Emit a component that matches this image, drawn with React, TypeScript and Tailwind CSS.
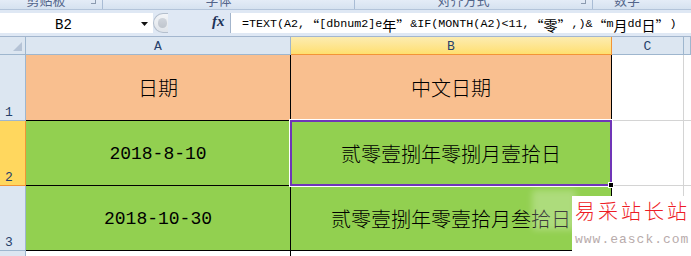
import React from "react";

const cjk = "font-['Noto_Sans_CJK_SC',sans-serif]";
const mono = "font-['Liberation_Mono','DejaVu_Sans_Mono',monospace]";

function Hdr({ children, sel }: { children?: React.ReactNode; sel?: boolean }) {
  return (
    <div
      className={
        sel
          ? "bg-linear-to-b from-[#fcecb0] to-[#ffdf6e] border-r border-b border-[#f29436] flex items-end justify-center pb-[1px] text-[13px] leading-none text-[#27416b] font-['Liberation_Mono',monospace]"
          : "bg-[#dce6f1] border-r border-b border-[#9eb6ce] flex items-end justify-center pb-[1px] text-[13px] leading-none text-[#27416b] font-['Liberation_Mono',monospace]"
      }
    >
      {children}
    </div>
  );
}

function RowHdr({ n, sel }: { n: string; sel?: boolean }) {
  return (
    <div
      className={
        sel
          ? "bg-[#ffd75e] border-r border-b border-[#f29436] flex items-end pl-[5px] pb-[1px] text-[13px] leading-none text-[#27416b] font-['Liberation_Mono',monospace]"
          : "bg-[#dce6f1] border-r border-b border-[#9eb6ce] flex items-end pl-[5px] pb-[1px] text-[13px] leading-none text-[#27416b] font-['Liberation_Mono',monospace]"
      }
    >
      {n}
    </div>
  );
}

export default function App() {
  return (
    <div className="relative w-[691px] h-[256px] overflow-hidden bg-white">
      {/* ribbon bottom strip (group labels cut off at the top edge, as in the reference) */}
      <div className="h-[10px] bg-linear-to-b from-[#e4ecf7] to-[#d6e2f0] border-b border-[#b3c4da] flex overflow-hidden text-[13px] leading-none text-[#53658a]">
        <div className={`w-[103px] relative flex justify-center border-r border-[#a9bcd5] ${cjk}`}>
          <span className="-mt-[7px] pr-[10px]">剪贴板</span>
          <span className="absolute right-[6px] top-0 w-[5px] h-[4px] border-r border-b border-[#8c9bb0]" />
        </div>
        <div className={`w-[252px] flex justify-center border-r border-[#a9bcd5] ${cjk}`}>
          <span className="-mt-[7px] pr-[20px]">字体</span>
        </div>
        <div className={`w-[238px] relative flex justify-center border-r border-[#a9bcd5] ${cjk}`}>
          <span className="-mt-[7px] pr-[20px]">对齐方式</span>
          <span className="absolute right-[6px] top-0 w-[5px] h-[4px] border-r border-b border-[#8c9bb0]" />
        </div>
        <div className={`flex-1 flex justify-center ${cjk}`}>
          <span className="-mt-[7px] pr-[30px]">数字</span>
        </div>
      </div>

      {/* formula bar */}
      <div className="h-[27px] bg-[#dfe8f4] border-b border-[#a3b6ce] pt-[3px] flex">
        <div className="w-[153px] h-[20px] bg-white relative flex items-center">
          <span className={`w-[127px] text-center text-[14px] leading-none pt-[3px] text-black ${mono}`}>B2</span>
          <svg className="absolute left-[141px] top-[9px]" width="7" height="4" viewBox="0 0 7 4">
            <path d="M0 0H7L3.5 4Z" fill="#111" />
          </svg>
        </div>
        <div className="w-[77px] h-[20px] relative flex items-center">
          <div className="absolute left-0 top-0 w-[15px] h-[20px] rounded-l-full border border-r-0 border-[#b4bfcd] bg-linear-to-b from-[#f3f5f8] to-[#dfe4ea] flex items-center justify-end">
            <div className="w-[9px] h-[10px] rounded-full bg-linear-to-b from-[#d0d5dc] to-[#bfc5cd] mr-[1px]" />
          </div>
          <span className="absolute left-[59px] top-[1px] text-[15px] leading-none italic font-bold text-[#1d3358] font-['Liberation_Serif',serif]">
            fx
          </span>
        </div>
        <div className="w-px h-[20px] bg-[#a3b5cc]" />
        <div className="flex-1 h-[20px] bg-white pl-[11px] flex items-center whitespace-nowrap overflow-hidden text-[11.7px] leading-none text-black pt-[3px]">
          <span className={mono}>=TEXT(A2,</span>
          <span className={`${cjk} text-[14px]`}>“</span>
          <span className={mono}>[dbnum2]e</span>
          <span className={`${cjk} text-[14px]`}>年”</span>
          <span className={mono}>&amp;IF(MONTH(A2)&lt;11,</span>
          <span className={`${cjk} text-[14px]`}>“零”</span>
          <span className={mono}>,)&amp;</span>
          <span className={`${cjk} text-[14px]`}>“</span>
          <span className={mono}>m</span>
          <span className={`${cjk} text-[14px]`}>月</span>
          <span className={mono}>dd</span>
          <span className={`${cjk} text-[14px]`}>日”</span>
          <span className={mono}>)</span>
        </div>
      </div>

      {/* grid */}
      <div className="grid grid-cols-[26px_265px_321px_72px_7px] grid-rows-[18px_66px_65px_65px_5px] h-[219px] overflow-hidden">
        <div className="bg-[#dce6f1] border-r border-b border-[#9eb6ce] relative">
          <svg className="absolute right-[3px] bottom-[3px]" width="9" height="9" viewBox="0 0 9 9">
            <path d="M9 0V9H0Z" fill="#b5c3d6" />
          </svg>
        </div>
        <Hdr>A</Hdr>
        <Hdr sel>B</Hdr>
        <Hdr>C</Hdr>
        <Hdr />

        <RowHdr n="1" />
        <div className={`bg-[#f9bf8f] border-r border-b border-black flex items-center justify-center text-[20px] font-light text-black ${cjk}`}>
          日期
        </div>
        <div className={`bg-[#f9bf8f] border-r border-b border-black flex items-center justify-center text-[20px] font-light text-black ${cjk}`}>
          中文日期
        </div>
        <div className="border-r border-b border-[#d4d4d4]" />
        <div className="border-b border-[#d4d4d4]" />

        <RowHdr n="2" sel />
        <div className={`bg-[#92d050] border-r border-b border-black flex items-center justify-center text-[18px] text-black pt-[2px] ${mono}`}>
          2018-8-10
        </div>
        <div className={`bg-[#92d050] border-r border-b border-black flex items-center justify-center text-[20px] font-light text-black pt-[2px] ${cjk}`}>
          贰零壹捌年零捌月壹拾日
        </div>
        <div className="border-r border-b border-[#d4d4d4]" />
        <div className="border-b border-[#d4d4d4]" />

        <RowHdr n="3" />
        <div className={`bg-[#92d050] border-r border-b border-black flex items-center justify-center text-[18px] text-black pt-[2px] ${mono}`}>
          2018-10-30
        </div>
        <div className={`bg-[#92d050] border-r border-b border-black flex items-center justify-center text-[20px] font-light text-black pt-[2px] whitespace-nowrap ${cjk}`}>
          贰零壹捌年零壹拾月叁拾日
        </div>
        <div className="border-r border-b border-[#d4d4d4]" />
        <div className="border-b border-[#d4d4d4]" />

        <div className="bg-[#dce6f1] border-r border-[#9eb6ce]" />
        <div className="border-r border-black" />
        <div className="border-r border-black" />
        <div className="border-r border-[#d4d4d4]" />
        <div />
      </div>

      {/* selection B2 */}
      <div className="absolute left-[289px] top-[119px] w-[324px] h-[68px] border border-white pointer-events-none">
        <div className="w-full h-full border-2 border-[#7035b8]" />
      </div>
      <div className="absolute left-[608px] top-[182px] w-[6px] h-[6px] bg-black border border-white" />

      {/* watermark */}
      <div className="absolute left-[532px] top-[190px] w-[44px] h-[40px] bg-white/25 blur-[3px] rounded-sm" />
      <div className="absolute left-[572px] top-[196px] w-[119px] h-[60px] bg-white flex flex-col">
        <div className={`pl-[3px] pt-[4px] text-[20px] leading-[22px] tracking-[3px] text-[#ee1c25] whitespace-nowrap font-light ${cjk}`}>
          易采站长站
        </div>
        <div className={`pl-[3px] pt-[11px] text-[13px] leading-none tracking-[1px] text-[#b8abab] whitespace-nowrap ${mono}`}>
          www.easck.com
        </div>
      </div>
    </div>
  );
}
